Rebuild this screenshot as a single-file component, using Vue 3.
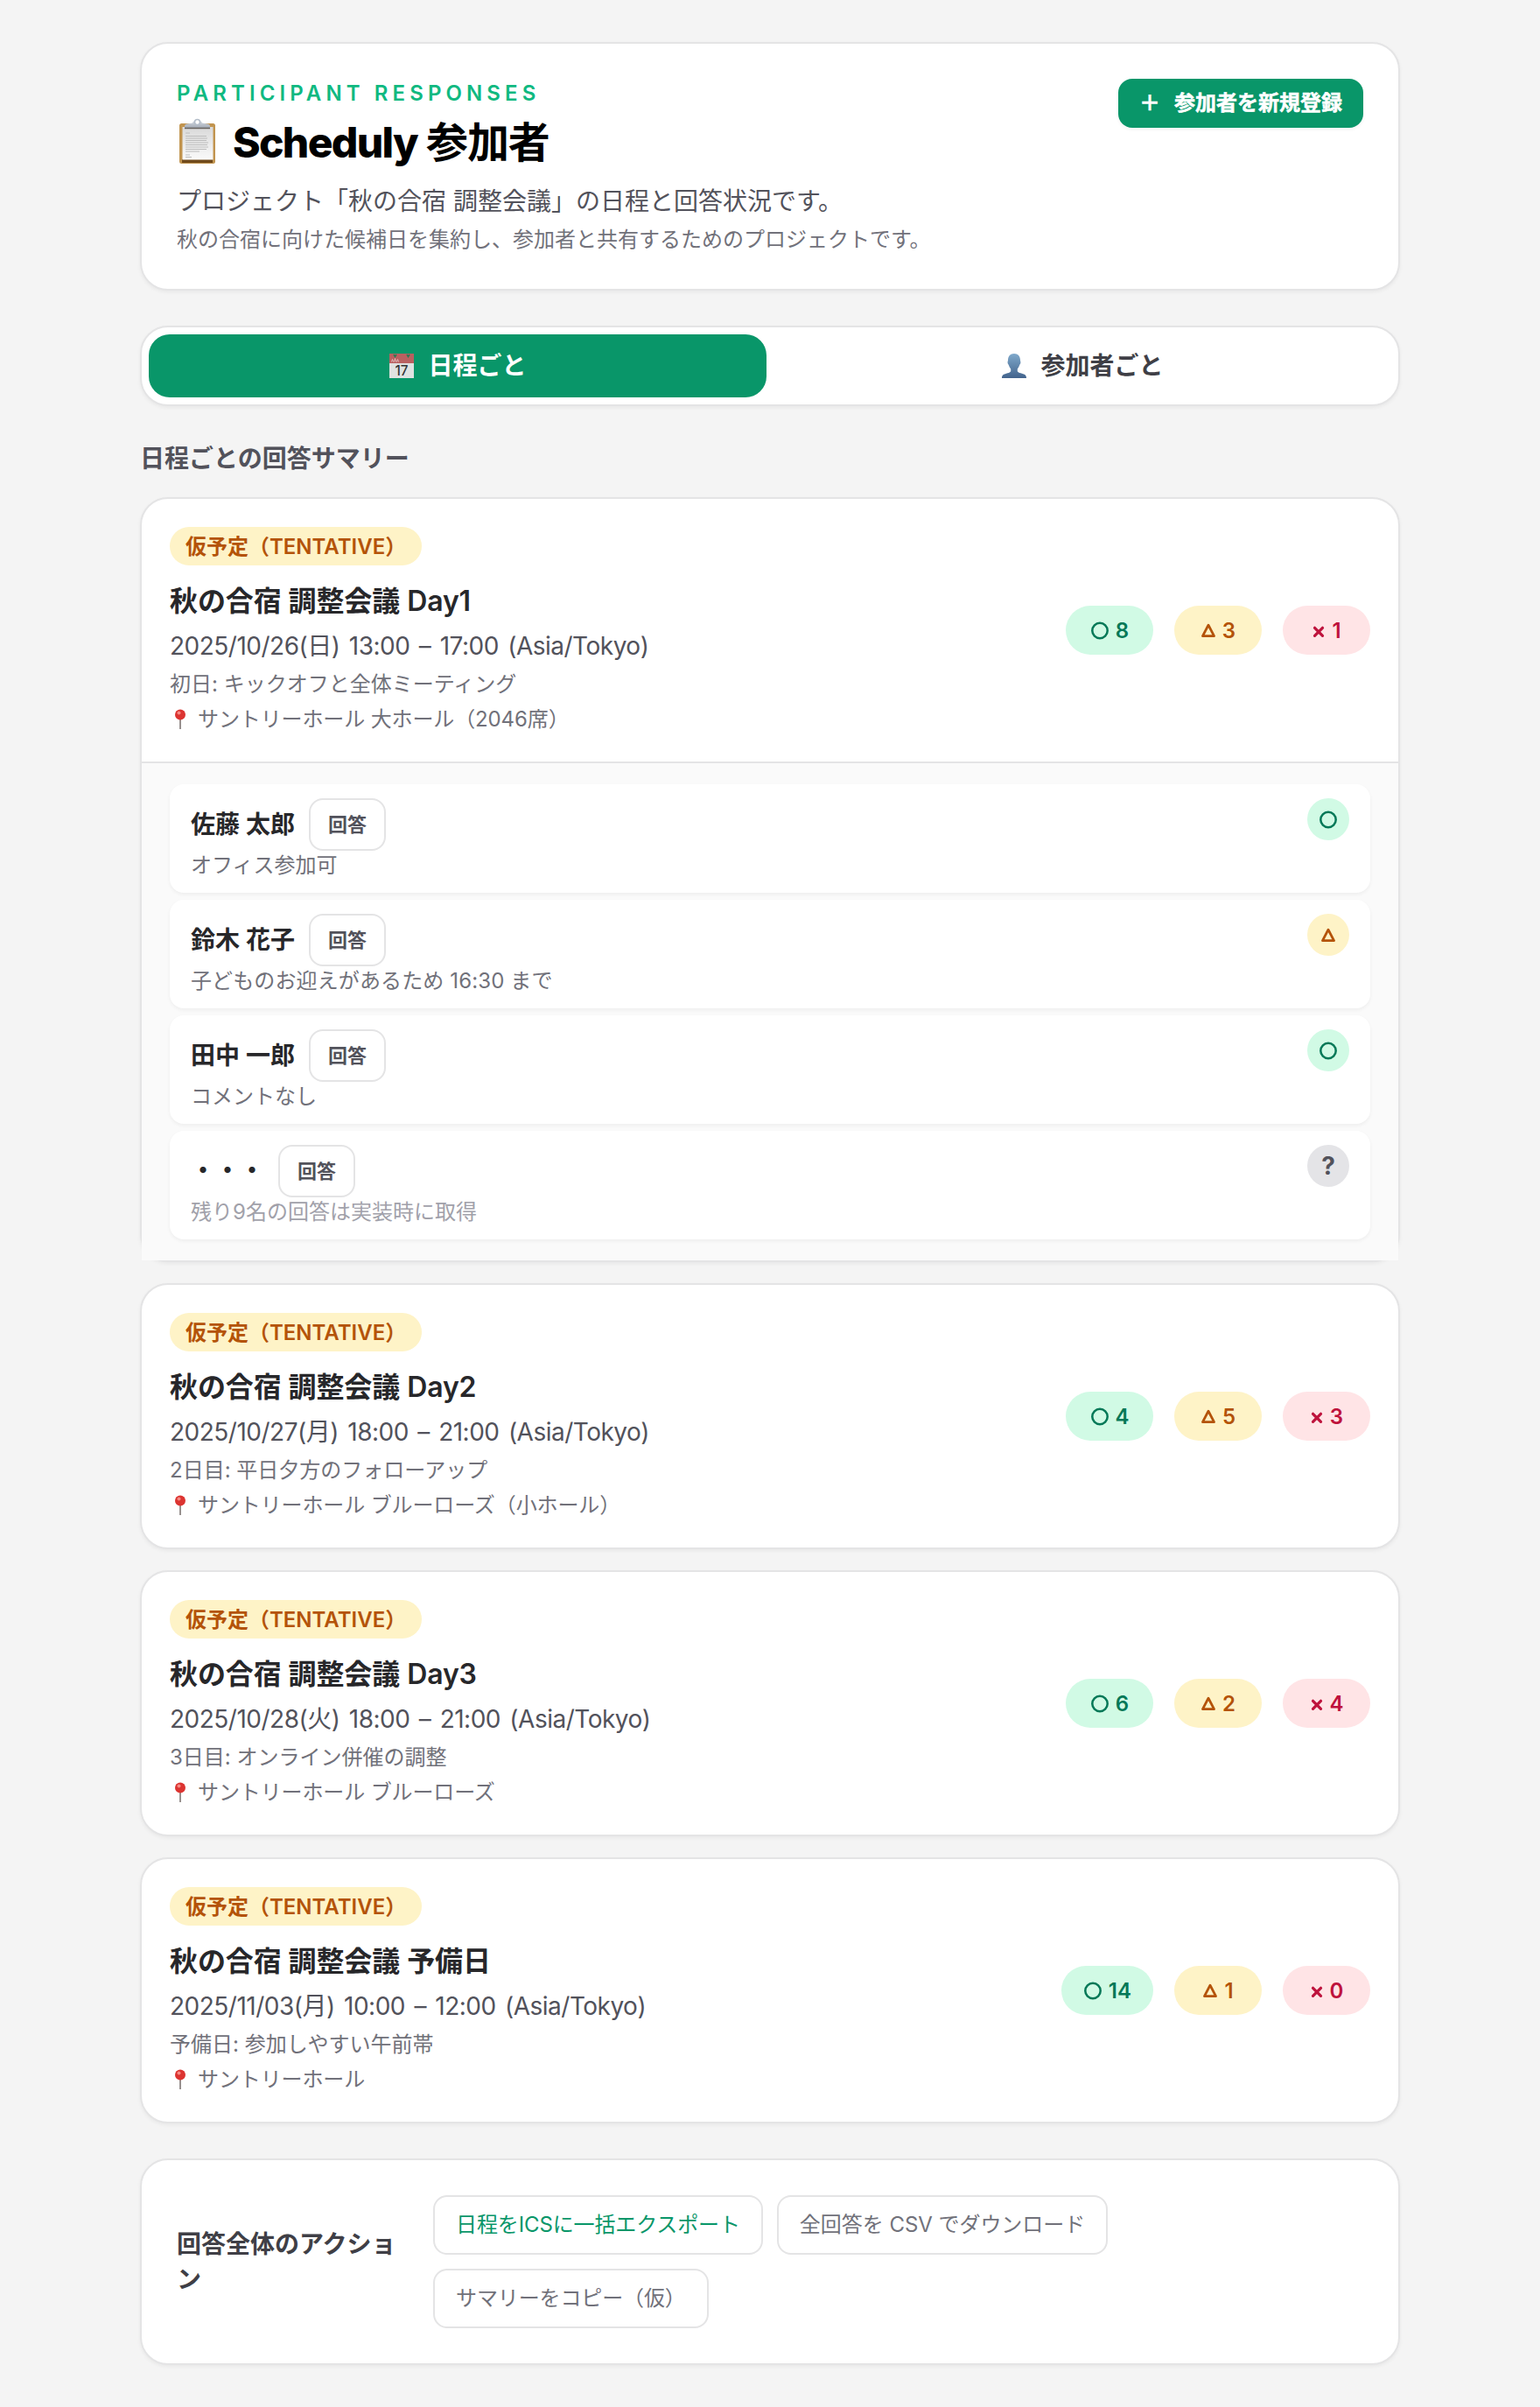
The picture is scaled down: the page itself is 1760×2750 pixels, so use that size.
<script setup>
import { h } from 'vue'

const shapes = {
  ok: { w: 22, el: () => h('circle', { cx: 11, cy: 12.5, r: 8.7, 'stroke-width': 2.5 }) },
  maybe: { w: 18, el: () => h('path', { d: 'M9 6.200L15.500 18.700H2.500z', 'stroke-width': 2.8 }) },
  ng: { w: 16, el: () => h('path', { d: 'M3.500 9.300l9 9M12.500 9.300l-9 9', 'stroke-width': 3.2 }) },
}
const Shape = (props) => {
  const s = shapes[props.kind]
  return h('svg', {
    width: s.w,
    height: 24,
    viewBox: `0 0 ${s.w} 24`,
    fill: 'none',
    stroke: 'currentColor',
    'stroke-linejoin': 'round',
    'stroke-linecap': 'round',
  }, [s.el()])
}
Shape.props = ['kind']

const people = [
  { name: '佐藤 太郎', note: 'オフィス参加可', status: 'ok' },
  { name: '鈴木 花子', note: '子どものお迎えがあるため 16:30 まで', status: 'maybe' },
  { name: '田中 一郎', note: 'コメントなし', status: 'ok' },
  { name: '・・・', note: '残り9名の回答は実装時に取得', status: 'pending' },
]
const events = [
  { title: '秋の合宿 調整会議 Day1', date: '2025/10/26(日) 13:00 – 17:00 (Asia/Tokyo)', desc: '初日: キックオフと全体ミーティング', place: 'サントリーホール 大ホール（2046席）', ok: 8, maybe: 3, ng: 1, people },
  { title: '秋の合宿 調整会議 Day2', date: '2025/10/27(月) 18:00 – 21:00 (Asia/Tokyo)', desc: '2日目: 平日夕方のフォローアップ', place: 'サントリーホール ブルーローズ（小ホール）', ok: 4, maybe: 5, ng: 3 },
  { title: '秋の合宿 調整会議 Day3', date: '2025/10/28(火) 18:00 – 21:00 (Asia/Tokyo)', desc: '3日目: オンライン併催の調整', place: 'サントリーホール ブルーローズ', ok: 6, maybe: 2, ng: 4 },
  { title: '秋の合宿 調整会議 予備日', date: '2025/11/03(月) 10:00 – 12:00 (Asia/Tokyo)', desc: '予備日: 参加しやすい午前帯', place: 'サントリーホール', ok: 14, maybe: 1, ng: 0 },
]
</script>

<template>
  <main class="page">
    <header class="card header">
      <div>
        <p class="eyebrow">PARTICIPANT RESPONSES</p>
        <h1>
          <svg class="clip" viewBox="0 0 46 54" width="46" height="54">
            <defs>
              <linearGradient id="paper" x1="0" y1="0" x2="0" y2="1"><stop offset="0" stop-color="#d9d9d9" /><stop offset="1" stop-color="#fafafa" /></linearGradient>
              <linearGradient id="metal" x1="0" y1="0" x2="0" y2="1"><stop offset="0" stop-color="#d3d9e2" /><stop offset="1" stop-color="#9ba3ae" /></linearGradient>
            </defs>
            <rect x="3" y="6" width="41" height="46" rx="2.5" fill="#c1944f" />
            <rect x="6" y="47" width="35" height="4" fill="#704a1b" />
            <rect x="6.500" y="10" width="35" height="37.500" fill="url(#paper)" />
            <g stroke="#bcbcbc" stroke-width="1">
              <path d="M10 17h5M10 20.500h24M10 23h25M10 25.500h24M10 28h26M10 30.500h25M10 33h26M10 35.500h24M10 38h16M10 42h5M10 44.500h7" />
            </g>
            <path d="M9 12V9q0-2 3-2.500l6-1 1-2h9l1 2 6 1q3 .5 3 2.500v3z" fill="url(#metal)" />
            <path d="M9 11.500h29" stroke="#67625f" stroke-width="1.500" />
            <circle cx="23.500" cy="4.500" r="3" fill="#fff" stroke="#b3bdc9" stroke-width="1.500" />
          </svg>
          <span class="title"><span class="brand">Scheduly</span> 参加者</span>
        </h1>
        <p class="lead">プロジェクト「秋の合宿 調整会議」の日程と回答状況です。</p>
        <p class="sub">秋の合宿に向けた候補日を集約し、参加者と共有するためのプロジェクトです。</p>
      </div>
      <button class="register"><span>＋</span><span>参加者を新規登録</span></button>
    </header>

    <nav class="tabs">
      <button class="tab active">
        <svg class="cal" viewBox="0 0 28 28" width="28" height="28">
          <rect width="28" height="28" fill="#e0e2e1" />
          <rect width="28" height="11" fill="#b96060" />
          <path d="M5 1l1.500 2.500L8 1M20 1l1.500 2.500L23 1" fill="none" stroke="#287a55" stroke-width="1.500" />
          <path d="M2.500 9.500l1-3 1 3M5.500 9.500l1-4 1 4M8.500 9.500l1-3 1 3" fill="none" stroke="#e2b8b8" stroke-width="1" />
          <text x="14" y="25" text-anchor="middle" font-size="16" font-weight="500" fill="#333" textLength="15" lengthAdjust="spacingAndGlyphs">17</text>
        </svg>
        <span>日程ごと</span>
      </button>
      <button class="tab">
        <svg class="user" viewBox="0 0 28 28" width="28" height="28">
          <defs><linearGradient id="person" x1="0" y1="0" x2="0" y2="1"><stop offset="0" stop-color="#7fa9cb" /><stop offset="1" stop-color="#43648d" /></linearGradient></defs>
          <path d="M14 0c4.500 0 7 3 7 7.500 0 1 .6 1.500.4 3-.2 1.500-1 1.700-1.400 3-.5 1.800-1.500 3-2.200 4v2.800c1.200 1.700 3.200 1.900 5.200 2.500 3.500 1 5 2 5 5.200H0c0-3.200 1.500-4.200 5-5.200 2-.6 4-.8 5.200-2.500v-2.800c-.7-1-1.700-2.200-2.200-4-.4-1.300-1.200-1.500-1.400-3-.2-1.500.4-2 .4-3C7 3 9.500 0 14 0z" fill="url(#person)" />
        </svg>
        <span>参加者ごと</span>
      </button>
    </nav>

    <h2>日程ごとの回答サマリー</h2>

    <section class="events">
      <article v-for="e in events" :key="e.title" class="card event">
        <div class="summary">
          <div>
            <span class="badge">仮予定（TENTATIVE）</span>
            <h3>{{ e.title }}</h3>
            <p class="date">{{ e.date }}</p>
            <p class="desc">{{ e.desc }}</p>
            <p class="place">
              <svg viewBox="0 0 14 24" width="14" height="24">
                <path d="M7 11v12" stroke="#8d8583" stroke-width="1.800" />
                <circle cx="7" cy="6.500" r="6" fill="#dc3431" />
                <circle cx="5.500" cy="4.500" r="2" fill="#f68a84" />
              </svg>
              <span>{{ e.place }}</span>
            </p>
          </div>
          <div class="counts">
            <span class="count ok"><Shape kind="ok" /><b>{{ e.ok }}</b></span>
            <span class="count maybe"><Shape kind="maybe" /><b>{{ e.maybe }}</b></span>
            <span class="count ng"><Shape kind="ng" /><b>{{ e.ng }}</b></span>
          </div>
        </div>
        <ul v-if="e.people" class="people">
          <li v-for="p in e.people" :key="p.name">
            <div>
              <div class="who"><span class="name">{{ p.name }}</span><button class="reply">回答</button></div>
              <p class="note" :class="p.status">{{ p.note }}</p>
            </div>
            <span class="mark" :class="p.status">
              <template v-if="p.status === 'pending'">?</template>
              <Shape v-else :kind="p.status" />
            </span>
          </li>
        </ul>
      </article>
    </section>

    <footer class="card actions">
      <div class="actions-title">回答全体のアクション</div>
      <div class="buttons">
        <button class="primary">日程をICSに一括エクスポート</button>
        <button class="csv">全回答を CSV でダウンロード</button>
        <button>サマリーをコピー（仮）</button>
      </div>
    </footer>
  </main>
</template>

<style>
body {
  background: #f4f4f4;
}
</style>

<style scoped>
* {
  box-sizing: border-box;
  margin: 0;
  padding: 0;
}
.page {
  width: 1440px;
  margin: 0 auto;
  padding: 48px 0;
  font-family: Inter, "Noto Sans CJK JP", sans-serif;
  font-size: 24px;
  line-height: 32px;
  color: #27272a;
}
button {
  font: inherit;
  color: inherit;
  border: 0;
  background: none;
  white-space: nowrap;
}
.card {
  background: #fff;
  border: 2px solid #e4e4e5;
  border-radius: 32px;
  box-shadow: 0 2px 4px rgba(0, 0, 0, 0.05);
}
.header {
  display: flex;
  justify-content: space-between;
  align-items: flex-start;
  padding: 40px;
}
.eyebrow {
  height: 32px;
  padding-top: 1px;
  font-weight: 600;
  letter-spacing: 5.1px;
  color: #10b981;
}
h1 {
  display: flex;
  align-items: center;
  margin-top: 8px;
  font-size: 48px;
  line-height: 64px;
  font-weight: 700;
  letter-spacing: -1.2px;
  color: #000;
}
.title {
  height: 64px;
  padding-top: 1px;
}
.brand {
  font-weight: 800;
  letter-spacing: -1.7px;
}
.clip {
  margin: 0 18px 0 0;
}
.lead {
  margin-top: 16px;
  font-size: 28px;
  line-height: 40px;
  color: #52525b;
}
.sub {
  margin-top: 8px;
  color: #71717a;
}
.register {
  display: flex;
  gap: 16px;
  padding: 12px 24px;
  border-radius: 16px;
  background: #099669;
  color: #fff;
  font-weight: 700;
  -webkit-text-stroke: 0.5px #fff;
  box-shadow: 0 2px 4px rgba(0, 0, 0, 0.05);
}
.tabs {
  display: grid;
  grid-template-columns: 1fr 1fr;
  gap: 8px;
  margin-top: 40px;
  padding: 8px;
  background: #fff;
  border: 2px solid #e4e4e5;
  border-radius: 32px;
  box-shadow: 0 2px 4px rgba(0, 0, 0, 0.05);
}
.tab {
  display: flex;
  align-items: center;
  justify-content: center;
  gap: 16px;
  padding: 16px 0;
  border-radius: 24px;
  font-size: 28px;
  line-height: 40px;
  font-weight: 600;
  color: #3f3f46;
}
.tab svg {
  margin-left: 1px;
}
.tab.active {
  background: #099669;
  color: #fff;
}
h2 {
  margin: 40px 0 24px;
  font-size: 28px;
  line-height: 40px;
  font-weight: 600;
  color: #52525b;
}
.events {
  display: flex;
  flex-direction: column;
  gap: 24px;
}
.summary {
  display: flex;
  justify-content: space-between;
  align-items: center;
  padding: 32px;
}
.badge {
  display: block;
  width: 288px;
  padding: 7px 18px 5px;
  border-radius: 22px;
  background: #fef3c7;
  color: #b45309;
  font-weight: 600;
  white-space: nowrap;
}
h3 {
  height: 48px;
  margin-top: 16px;
  padding-top: 1px;
  font-size: 32px;
  line-height: 48px;
  font-weight: 600;
  letter-spacing: -0.1px;
}
.date {
  margin-top: 8px;
  font-size: 28px;
  line-height: 40px;
  letter-spacing: -0.5px;
  word-spacing: 3px;
  color: #52525b;
}
.desc,
.place {
  margin-top: 8px;
  color: #71717a;
}
.place {
  display: flex;
  align-items: center;
  gap: 13px;
  letter-spacing: -0.12px;
}
.place svg {
  margin-left: 5px;
}
.counts {
  display: flex;
  gap: 24px;
}
.count {
  display: flex;
  align-items: center;
  justify-content: center;
  gap: 7px;
  min-width: 100px;
  height: 56px;
  padding: 0 25px;
  border-radius: 28px;
}
.count b {
  padding-top: 1px;
  font-weight: 600;
}
.ok.count,
.ok.mark {
  background: #d1fae5;
  color: #047857;
}
.maybe.count,
.maybe.mark {
  background: #fef3c7;
  color: #b45309;
}
.ng.count {
  background: #ffe4e6;
  color: #be123c;
}
.people {
  display: flex;
  flex-direction: column;
  gap: 8px;
  padding: 24px 32px;
  list-style: none;
  background: #fafafa;
  border-top: 2px solid #e4e4e5;
}
.people li {
  display: flex;
  justify-content: space-between;
  align-items: flex-start;
  padding: 16px 24px;
  border-radius: 16px;
  background: #fff;
  box-shadow: 0 2px 4px rgba(0, 0, 0, 0.05);
}
.who {
  display: flex;
  align-items: center;
  gap: 16px;
}
.name {
  font-size: 28px;
  line-height: 40px;
  font-weight: 600;
}
.reply {
  height: 60px;
  padding: 0 20px;
  border: 2px solid #e4e4e5;
  border-radius: 16px;
  font-size: 22px;
  font-weight: 600;
  color: #52525b;
}
.note {
  height: 32px;
  padding-top: 1px;
  color: #71717a;
}
.note.maybe {
  letter-spacing: 0.12px;
}
.note.pending {
  color: #a1a1aa;
}
.mark {
  display: flex;
  align-items: center;
  justify-content: center;
  width: 48px;
  height: 48px;
  border-radius: 50%;
  font-size: 28px;
  font-weight: 700;
}
.mark.pending {
  background: #e4e4e7;
  color: #52525b;
}
.actions {
  display: flex;
  align-items: center;
  gap: 24px;
  margin-top: 40px;
  padding: 40px;
}
.actions-title {
  flex: 0 0 269px;
  font-size: 28px;
  line-height: 40px;
  font-weight: 600;
  color: #3f3f46;
}
.buttons {
  display: flex;
  flex-wrap: wrap;
  gap: 16px;
  width: 800px;
}
.buttons button {
  padding: 16px 24px;
  border: 2px solid #e4e4e5;
  border-radius: 16px;
  letter-spacing: -0.12px;
  color: #71717a;
}
.buttons .csv {
  letter-spacing: -0.04px;
}
.buttons .primary {
  color: #099669;
}
</style>
